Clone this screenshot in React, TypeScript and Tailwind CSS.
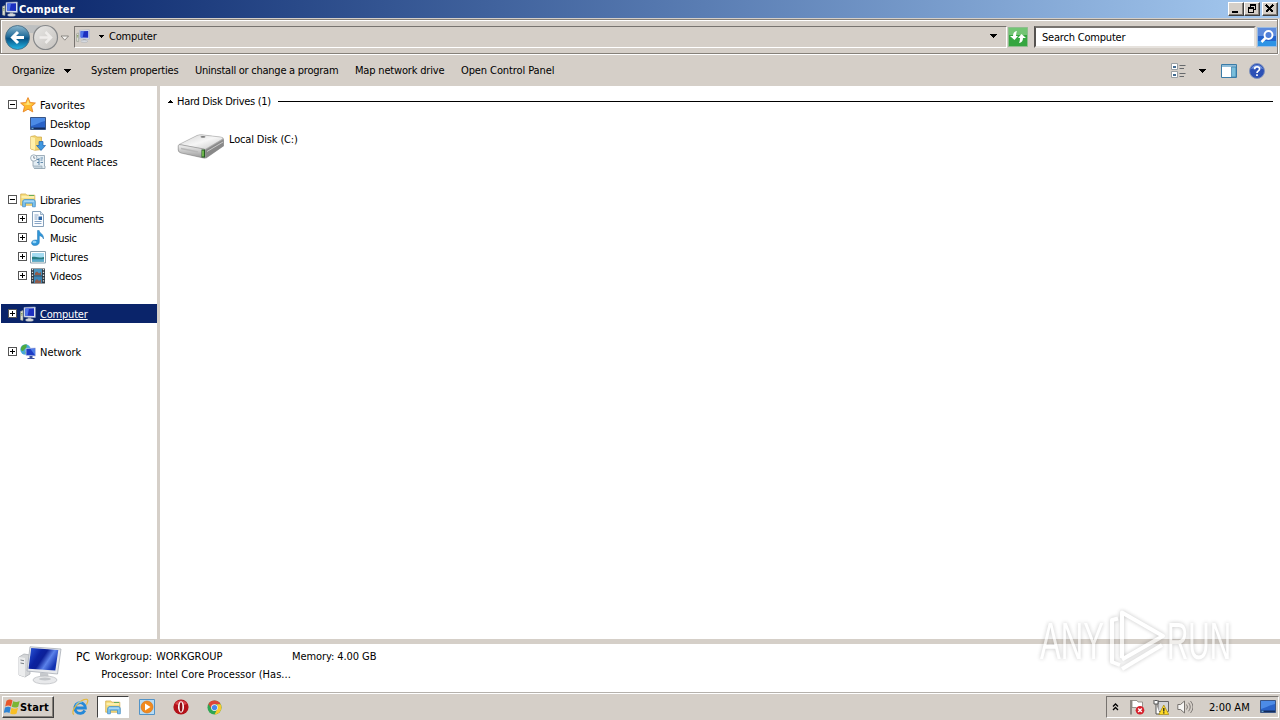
import type { ReactNode } from "react";
import clsx from "clsx";

type IconProps = { className?: string };

function PcIcon({ className = "h-4 w-4" }: IconProps) {
  return (
    <svg viewBox="0 0 16 16" className={className}>
      <path d="M0.5 5.5 3 4.5v10l-2.500-.5z" fill="#d9dcd0" stroke="#8f948c" strokeWidth=".6" />
      <path d="M1 7.500h1.500M1 9h1.500" stroke="#6c8a3e" strokeWidth=".8" />
      <path d="M4 1.500 15.300 1v10.500L4 11z" fill="#dfe6f5" stroke="#9aa6c4" strokeWidth=".6" />
      <path d="M5.200 2.600 14 2.200v7.900l-8.800-.3z" fill="#1c2fc0" />
      <path d="M5.200 2.600 9 2.400 7.500 9.900l-2.300-.1z" fill="#4f74ea" />
      <path d="M8 11.500h3l.4 1.800H7.600z" fill="#a9afb8" />
      <ellipse cx="9.500" cy="14" rx="4" ry="1.300" fill="#dcdfe4" stroke="#9ba1ab" strokeWidth=".5" />
    </svg>
  );
}

function BigPcIcon() {
  return (
    <svg viewBox="0 0 44 40" className="h-10 w-11">
      <defs>
        <linearGradient id="screen" x1="0" y1="0" x2="1" y2=".5">
          <stop offset="0" stopColor="#2c5ade" />
          <stop offset=".4" stopColor="#0b22a0" />
          <stop offset=".55" stopColor="#0c2098" />
          <stop offset=".75" stopColor="#5b82ea" />
          <stop offset="1" stopColor="#1231b0" />
        </linearGradient>
      </defs>
      <path d="M1 11 6 8l6 1v19l-5 3-6-2z" fill="#d4d6d8" stroke="#a7abb0" strokeWidth=".7" />
      <path d="M1 11 7 12v19l-6-2z" fill="#ecedee" />
      <path d="M2.500 14 6 14.700M2.500 17 6 17.700" stroke="#7b8087" />
      <path d="M12 .8 43 3l-3.500 25L9 25z" fill="#e7e9ec" stroke="#a8adb6" strokeWidth=".8" />
      <path d="M13.200 2 40.300 4l-3 20.500-26.800-1.800z" fill="url(#screen)" />
      <path d="M22 27h8l1 6h-9z" fill="#c6c9cd" />
      <ellipse cx="27" cy="34" rx="12" ry="4" fill="#e8e9eb" stroke="#b7babf" strokeWidth=".7" />
      <ellipse cx="27" cy="33" rx="6" ry="1.500" fill="#c3c6ca" />
    </svg>
  );
}

function StarIcon() {
  return (
    <svg viewBox="0 0 16 16" className="h-4 w-4">
      <path d="M8 .6 10.200 5.500l5.200.5-3.900 3.500 1.300 5.400L8 12.200l-4.800 2.700 1.300-5.400L.6 6l5.200-.5z" fill="#fdb92c" stroke="#e8862a" strokeWidth=".9" strokeLinejoin="round" />
      <path d="M8 2.500 9.400 6.500 13 7l-5 1-5-1 3.600-.5z" fill="#ffe57c" />
    </svg>
  );
}

function DesktopIcon({ className = "h-4 w-4" }: IconProps) {
  return (
    <svg viewBox="0 0 16 16" className={className}>
      <path d="M.5 1.500h15v12H.5z" fill="#2a63c8" stroke="#3a5585" />
      <path d="M1 2h14v3C10 6 6 9 1 10z" fill="#4c8be6" />
      <path d="M1 11.500h14v1.500H1z" fill="#142d5c" />
      <path d="M1.500 12.300h2" stroke="#7ec2f0" />
    </svg>
  );
}

function DownloadsIcon() {
  return (
    <svg viewBox="0 0 16 16" className="h-4 w-4">
      <path d="M.8 1.500 5 .7 7 2h4.500v12.500L5 15.300.8 14z" fill="#f2d675" stroke="#cfa53e" strokeWidth=".7" />
      <path d="M1 1.800 5 3v12L1 13.800z" fill="#fff0ab" />
      <path d="M9 6.500h4v4h2.500L11 15.500 6.500 10.500H9z" fill="#3f97e0" stroke="#1f62ae" strokeWidth=".7" />
    </svg>
  );
}

function RecentIcon() {
  return (
    <svg viewBox="0 0 16 16" className="h-4 w-4">
      <path d="M5 1.500h9.500V12H15v2.500H4.500L3 12V7z" fill="#e3edf4" stroke="#8a9dab" strokeWidth=".8" />
      <path d="M3 12h9v2.500H4" fill="#c5d3dd" stroke="#8a9dab" strokeWidth=".6" />
      <path d="M7 5.500h2M10.500 4h2.500M7 8.500h2M10.500 8.500h2.500M9 4v7M10.500 6h2" stroke="#557fa3" strokeWidth=".9" />
      <circle cx="3.800" cy="4" r="3.200" fill="#f6fafd" stroke="#8a9dab" strokeWidth=".8" />
      <path d="M3.800 2v2.200h1.500" fill="none" stroke="#567" strokeWidth=".7" />
    </svg>
  );
}

function LibraryIcon() {
  return (
    <svg viewBox="0 0 16 16" className="h-4 w-4">
      <path d="M.7 2h5L7 3.200h7.800v10H.7z" fill="#f7df80" stroke="#cda341" strokeWidth=".7" />
      <path d="M1.500 5h12.800" stroke="#fff6c6" strokeWidth="1.300" />
      <path d="M9 3.500h5" stroke="#67ad58" />
      <path d="M2.600 14.800V10c0-1.600.9-2.500 2.500-2.500H13c1.600 0 2.300.9 2.300 2.500v4.800h-2.800v-3.600H5.400v3.600z" fill="#7cc2ee" stroke="#3a86c4" strokeWidth=".7" />
      <path d="M4 9.200h10" stroke="#cdeafd" strokeWidth=".8" />
    </svg>
  );
}

function DocumentIcon() {
  return (
    <svg viewBox="0 0 16 16" className="h-4 w-4">
      <path d="M2.500.5h8l3 3v12h-11z" fill="#fbfdff" stroke="#7895b2" strokeWidth=".9" />
      <path d="M10.500.5v3h3" fill="#d5e3ef" stroke="#7895b2" strokeWidth=".7" />
      <path d="M4.500 4h4M4.500 6h3M4.500 8h3M4.500 10.500h7M4.500 12.500h7" stroke="#7a9bc0" strokeWidth=".9" />
      <path d="M8.500 5.500h3.500V9H8.500z" fill="#2b65a5" />
    </svg>
  );
}

function MusicIcon() {
  return (
    <svg viewBox="0 0 16 16" className="h-4 w-4">
      <path d="M7.500.5h1.700c.4 3 4.800 3.400 4.300 8.500-.6-2-2.200-3-4.200-3.200V12c0 2-1.700 3.500-4.300 3.500-2 0-3.500-1-3.500-2.600 0-2.300 3.300-3.500 6-2.600z" fill="#2f96d8" stroke="#2374b5" strokeWidth=".5" />
      <ellipse cx="4.500" cy="12" rx="2" ry="1.200" fill="#93d3f7" />
    </svg>
  );
}

function PictureIcon() {
  return (
    <svg viewBox="0 0 16 16" className="h-4 w-4">
      <path d="M.5 2.500h15v11.500H.5z" fill="#fff" stroke="#8aa0ad" />
      <path d="M2 4h12v8.500H2z" fill="#a5dcf2" />
      <path d="M2 8c3-1 5 1.500 12 0v4.500H2z" fill="#287e83" />
      <path d="M2 10.500c4-1 8 .5 12-.5v2.500H2z" fill="#58a9cc" />
    </svg>
  );
}

function VideoIcon() {
  return (
    <svg viewBox="0 0 16 16" className="h-4 w-4">
      <path d="M1 .5h14v15H1z" fill="#303a42" />
      <path d="M4 1h8v6.500H4z" fill="#4a94bf" />
      <path d="M4 8.300h8V15H4z" fill="#3b86b6" />
      <path d="M5 5 7 3.500l2 2L11 4v3H5zM5 13l2-2 2 2 2-1.500V15H5z" fill="#8f5b4c" />
      <path d="M2.500 1v14M13.500 1v14" stroke="#dfe6ea" strokeWidth="1.300" strokeDasharray="1.300 1.500" />
    </svg>
  );
}

function NetworkIcon() {
  return (
    <svg viewBox="0 0 16 16" className="h-4 w-4">
      <circle cx="5.500" cy="5.500" r="5.200" fill="#47a8d8" />
      <path d="M1 4C2 1 5 .2 7 .6 6 2 7.500 3 5.500 4.500S4 7 2.500 7 1 5 1 4zM5 8l3-1v3.500H6z" fill="#4fab3e" />
      <path d="M6 4.500 15.500 4v8L6 11.500z" fill="#1e3cc6" stroke="#c2cce8" strokeWidth=".8" />
      <path d="M10.500 5 15 4.700v6.500z" fill="#4d7de8" />
      <path d="M9.500 12h3v2h2v1h-7v-1h2z" fill="#394f9e" />
    </svg>
  );
}

function DriveIcon() {
  return (
    <svg viewBox="0 0 48 28" className="h-7 w-12">
      <defs>
        <linearGradient id="lid" x1="0" y1="0" x2="1" y2="1">
          <stop offset="0" stopColor="#d2d2d2" />
          <stop offset=".5" stopColor="#f6f6f6" />
          <stop offset="1" stopColor="#c3c3c3" />
        </linearGradient>
        <linearGradient id="front" x1="0" y1="0" x2="0" y2="1">
          <stop offset="0" stopColor="#f3f3f3" />
          <stop offset="1" stopColor="#989898" />
        </linearGradient>
      </defs>
      <path d="M1.500 13 20 3.500q2-1 5-.7l19 2.300q3 .5 3 3V14L29 26.500 3.500 20.500Q1 20 1 17z" fill="#a3a3a3" />
      <path d="M2 12.500 20 3.500q2-1 5-.7l19 2.300q3 .5 1.500 2L28 17.500z" fill="url(#lid)" stroke="#aaa" strokeWidth=".6" />
      <path d="M1.200 13.500Q1.500 12.300 4 12.800L27 17q1.500.5 1.500 2v6q0 1.500-2 1L4 21q-2.500-.6-2.800-3z" fill="url(#front)" stroke="#888" strokeWidth=".6" />
      <path d="M4 16.500 21 20" stroke="#b7b7b7" strokeWidth="1.300" />
      <path d="M28.500 18 46.500 7.500V14L29 26z" fill="#898989" />
      <path d="M30 19.500 46 10" stroke="#c8c8c8" />
      <path d="M24.500 17.500h3.500v8h-3.500z" fill="#245b22" />
      <path d="M26 18.500v6" stroke="#9cf067" strokeWidth="1.200" />
      <ellipse cx="26" cy="4.800" rx="2.500" ry=".9" fill="#777" />
    </svg>
  );
}

function WindowsFlag() {
  return (
    <svg viewBox="0 0 16 16" className="h-4 w-4 shrink-0">
      <path d="M2.500 1.800q3.500-2.300 6-.2L7 7.500Q4.500 5.800 1.200 7.400z" fill="#e8562a" />
      <path d="M9.200 2.200q3 1.700 6.500-.2L14.200 7.700q-3.200 1.700-6.500.1z" fill="#7ab636" />
      <path d="M1 8.500Q4.500 7 6.800 8.500L5.500 14Q3 12.300-.3 14z" fill="#2f84d4" />
      <path d="M7.500 8.800q3 1.700 6.500 0L12.600 14.400q-3.100 1.700-6.400 0z" fill="#f8bf26" />
    </svg>
  );
}

function IeIcon() {
  return (
    <svg viewBox="0 0 18 18" className="h-[18px] w-[18px]">
      <path d="M13.800 12.500A5.300 5.300 0 1 1 14.400 10H5" fill="none" stroke="#2488d8" strokeWidth="2.800" />
      <path d="M3 16.500C-1 15 6 4 13 1.600c5-1.500 4.300 2 2.500 5" fill="none" stroke="#e2b83d" strokeWidth="1.200" />
      <path d="M4.500 7Q7 3 11 4" fill="none" stroke="#8fd2fa" strokeWidth=".9" />
    </svg>
  );
}

function PlayerIcon() {
  return (
    <svg viewBox="0 0 16 16" className="h-4 w-4">
      <path d="M.5.5h15v15H.5z" fill="#b7dcf5" stroke="#5293c7" />
      <circle cx="8" cy="8" r="6" fill="#f18a1e" stroke="#d56f13" strokeWidth=".6" />
      <path d="M6 4.500 11.500 8 6 11.500z" fill="#fff" />
    </svg>
  );
}

function OperaIcon() {
  return (
    <svg viewBox="0 0 16 16" className="h-4 w-4">
      <circle cx="8" cy="8" r="7.600" fill="#b31119" />
      <path d="M2 5a7 7 0 0 1 12 0L8 7z" fill="#d8444a" />
      <ellipse cx="8" cy="8" rx="3" ry="5.800" fill="#fff" />
      <ellipse cx="8" cy="8" rx="1.400" ry="4.700" fill="#8e0d14" />
    </svg>
  );
}

function ChromeIcon() {
  return (
    <svg viewBox="0 0 16 16" className="h-[15px] w-[15px]">
      <circle cx="8" cy="8" r="7.500" fill="#2fa652" />
      <path d="M8 8 1.500 4.300A7.500 7.500 0 0 1 14.500 4.500H8z" fill="#dd4437" />
      <path d="M14.500 4.500A7.500 7.500 0 0 1 8 15.500L11 9.500V4.500z" fill="#fbc92d" />
      <path d="M1.500 4.300 5 9.500 8 4.500z" fill="#dd4437" />
      <circle cx="8" cy="8" r="3.600" fill="#f3f3f3" />
      <circle cx="8" cy="8" r="2.800" fill="#4686ee" />
    </svg>
  );
}

function NavButtons() {
  return (
    <svg viewBox="0 0 68 28" className="h-7 w-[68px]">
      <defs>
        <linearGradient id="back" x1="0" y1="0" x2="0" y2="1">
          <stop offset="0" stopColor="#8cb8cf" />
          <stop offset=".45" stopColor="#256f9c" />
          <stop offset=".55" stopColor="#075385" />
          <stop offset="1" stopColor="#25b9e8" />
        </linearGradient>
        <linearGradient id="fwd" x1="0" y1="0" x2="1" y2="1">
          <stop offset="0" stopColor="#e9e8e6" />
          <stop offset="1" stopColor="#c4c1bd" />
        </linearGradient>
      </defs>
      <path d="M5 4Q26 0 48 4v6H5z" fill="#b3b9bd" opacity=".7" />
      <circle cx="13.500" cy="14.500" r="12" fill="url(#back)" stroke="#466c83" strokeWidth=".9" />
      <path d="M14 9 8.500 14.500l5.500 5.500M9 14.500H20" fill="none" stroke="#fff" strokeWidth="3" />
      <circle cx="41.500" cy="14.500" r="12" fill="url(#fwd)" stroke="#858789" strokeWidth="1.200" />
      <path d="M41.500 9 47 14.500 41.500 20M46.500 14.500h-11" fill="none" stroke="#efedeb" strokeWidth="2.500" />
      <path d="M57 13h7.500l-3.700 4.200z" fill="#f4f2ef" stroke="#77736f" strokeWidth=".8" />
    </svg>
  );
}

function Arrow({ className }: IconProps) {
  return (
    <svg viewBox="0 0 7 4" className={clsx("shrink-0", className)} shapeRendering="crispEdges">
      <path d="M0 0h7L3.500 4z" fill="#000" />
    </svg>
  );
}

function Expander({ open }: { open?: boolean }) {
  return (
    <svg viewBox="0 0 9 9" className="h-[9px] w-[9px] shrink-0" shapeRendering="crispEdges">
      <path d="M.5.5h8v8h-8z" fill="#fff" stroke="#555" />
      <path d={open ? "M2 4.500h5" : "M2 4.500h5M4.500 2v5"} stroke="#000" />
    </svg>
  );
}

function WindowButton({ children }: { children: ReactNode }) {
  return (
    <div className="flex h-3.5 w-4 items-center justify-center border border-t-white border-r-[#404040] border-b-[#404040] border-l-white bg-[#d5cfc8] shadow-[inset_-1px_-1px_0_#858079]">
      <svg viewBox="0 0 12 12" className="h-3 w-3 shrink-0" fill="none" stroke="#000" shapeRendering="crispEdges">
        {children}
      </svg>
    </div>
  );
}

type TreeItem = {
  label: string;
  icon: ReactNode;
  child?: boolean;
  open?: boolean;
  leaf?: boolean;
  selected?: boolean;
  tracking?: string;
};

const groups: TreeItem[][] = [
  [
    { label: "Favorites", icon: <StarIcon />, open: true, tracking: "tracking-[0.05px]" },
    { label: "Desktop", icon: <DesktopIcon />, child: true, leaf: true, tracking: "tracking-[-0.1px]" },
    { label: "Downloads", icon: <DownloadsIcon />, child: true, leaf: true, tracking: "tracking-[-0.2px]" },
    { label: "Recent Places", icon: <RecentIcon />, child: true, leaf: true, tracking: "tracking-[-0.1px]" },
  ],
  [
    { label: "Libraries", icon: <LibraryIcon />, open: true, tracking: "tracking-[-0.25px]" },
    { label: "Documents", icon: <DocumentIcon />, child: true, tracking: "tracking-[-0.3px]" },
    { label: "Music", icon: <MusicIcon />, child: true, tracking: "tracking-[-0.3px]" },
    { label: "Pictures", icon: <PictureIcon />, child: true, tracking: "tracking-[-0.1px]" },
    { label: "Videos", icon: <VideoIcon />, child: true, tracking: "tracking-[-0.2px]" },
  ],
  [{ label: "Computer", icon: <PcIcon />, selected: true, tracking: "tracking-[-0.2px]" }],
  [{ label: "Network", icon: <NetworkIcon /> }],
];

function TreeRow({ item }: { item: TreeItem }) {
  return (
    <div
      className={clsx(
        "ml-px flex h-[19px] items-center",
        item.child ? "pl-[17px]" : "pl-[7px]",
        item.selected && "bg-[#0a246a] text-white underline",
      )}
    >
      <div className="w-3">{!item.leaf && <Expander open={item.open} />}</div>
      <div className="w-5">{item.icon}</div>
      <span className={clsx("pt-0.5", item.tracking)}>{item.label}</span>
    </div>
  );
}

function TitleBar() {
  return (
    <header className="flex h-[18px] shrink-0 items-center bg-linear-to-r from-[#0a246a] to-[#a6caf0] px-0.5">
      <PcIcon />
      <h1 className="ml-px flex-1 pt-px text-[11px] font-bold tracking-[0.1px] text-white">Computer</h1>
      <WindowButton>
        <path d="M2 9h6" strokeWidth="2" />
      </WindowButton>
      <WindowButton>
        <path d="M4 2h6M4.500 2v2M9.500 2v5M8 6.500h2M2 5h6M2.500 5v5M7.500 5v5M2 9.500h6M4 1.500h6M2 4.500h6" />
      </WindowButton>
      <div className="ml-0.5">
        <WindowButton>
          <path d="m2 2 7 7m0-7-7 7" strokeWidth="1.700" />
        </WindowButton>
      </div>
    </header>
  );
}

function AddressBar() {
  return (
    <div className="mr-0.5 flex h-[35px] shrink-0 items-center border border-[#858079] shadow-[inset_1px_1px_0_#fff,0_1px_0_#fff,1px_0_0_#fff]">
      <div className="ml-[3px]">
        <NavButtons />
      </div>
      <div className="ml-0.5 flex h-[22px] w-[933px] items-center border border-t-[#77736f] border-r-white border-b-white border-l-[#77736f] pb-px">
        <PcIcon className="ml-px h-3.5 w-3.5" />
        <Arrow className="ml-[9px] h-[3px] w-[5px]" />
        <span className="ml-[5px] flex-1 tracking-[-0.2px]">Computer</span>
        <Arrow className="mr-[9px] h-1 w-[7px]" />
      </div>
      <svg viewBox="0 0 20 20" className="ml-px h-5 w-5">
        <path d="M.5.5h19v19H.5z" fill="#35a640" stroke="#8fbd8f" />
        <path d="M1 1h18v7H1z" fill="#73c574" />
        <path d="M9 4Q5 4.500 5 9H2l4.500 4L10 9H8q0-3 1-5zM11 16q4-.5 4-5h3l-4.500-4L10 11h2q0 3-1 5z" fill="#fff" />
      </svg>
      <div className="ml-1.5 flex h-[22px] w-[222px] items-center border-2 border-t-[#77736f] border-r-[#e6e2dd] border-b-[#e6e2dd] border-l-[#55524f] bg-white pt-px pl-1.5">
        <span className="tracking-[-0.2px]">Search Computer</span>
      </div>
      <svg viewBox="0 0 20 20" className="ml-px h-5 w-5">
        <path d="M.5.5h19v19H.5z" fill="#2363cc" stroke="#9bbce2" />
        <path d="M1 1h18v8H1z" fill="#5d8bdc" />
        <path d="M1 14h18v5H1z" fill="#2d93e5" />
        <circle cx="11.500" cy="8" r="4" fill="#4f7fd9" stroke="#fff" strokeWidth="1.900" />
        <path d="M8.500 11 4.500 15" stroke="#fff" strokeWidth="2.500" />
      </svg>
    </div>
  );
}

function CommandBar() {
  return (
    <nav className="mt-px flex h-[31px] shrink-0 items-center pl-3">
      <span className="w-[52px] tracking-[-0.2px]">Organize</span>
      <Arrow className="mr-5 h-1 w-[7px]" />
      <span className="w-[104px] tracking-[-0.18px]">System properties</span>
      <span className="w-40 tracking-[-0.25px]">Uninstall or change a program</span>
      <span className="w-[106px] tracking-[-0.18px]">Map network drive</span>
      <span className="flex-1 tracking-[-0.1px]">Open Control Panel</span>
      <svg viewBox="0 0 16 16" className="h-4 w-4">
        <path d="M1.500.500h6v6h-6zM1.500 8.500h6v6h-6z" fill="#fff" stroke="#9ba1a5" />
        <path d="M3 4h3M3 12h3" stroke="#416b91" strokeWidth="2" />
        <path d="M9.500 2.500h6M9.500 5.500h4.500M9.500 10.500h6M9.500 13.500h4.500" stroke="#66696c" />
      </svg>
      <Arrow className="ml-[13px] h-1 w-[7px]" />
      <svg viewBox="0 0 16 14" className="ml-[15px] h-3.5 w-4">
        <path d="M.5.500h15v13H.5z" fill="#fff" stroke="#397ba7" />
        <path d="M1 1h14v2H1z" fill="#8fbdd9" />
        <path d="M10.500 3h4.500v10h-4.500z" fill="#79bedb" stroke="#397ba7" strokeWidth=".7" />
      </svg>
      <svg viewBox="0 0 16 16" className="mr-[15px] ml-3 h-4 w-4">
        <circle cx="8" cy="8" r="7.500" fill="#2c50b5" stroke="#8093bd" />
        <path d="M2 6a6.500 6.500 0 0 1 12 0q-6-2-12 0z" fill="#6f91dd" />
        <path d="M5.600 6.200C5.600 3 10.600 3 10.600 6 10.600 8 8 7.800 8 10M8 11.300v1.800" fill="none" stroke="#fff" strokeWidth="1.700" />
      </svg>
    </nav>
  );
}

function DetailsPane() {
  return (
    <section className="flex h-12 shrink-0 bg-white pl-[18px]">
      <div className="pt-0.5">
        <BigPcIcon />
      </div>
      <div className="ml-3.5 flex pt-1 leading-[18px]">
        <span className="w-5 text-[12px]">PC</span>
        <div className="w-[60px] pr-1 whitespace-nowrap">
          <p className="flex justify-end">Workgroup:</p>
          <p className="flex justify-end">Processor:</p>
        </div>
        <div className="w-[136px] whitespace-nowrap">
          <p>WORKGROUP</p>
          <p className="tracking-[0.04px]">Intel Core Processor (Has...</p>
        </div>
        <p className="tracking-[-0.08px]">Memory: 4.00 GB</p>
      </div>
    </section>
  );
}

function Tray() {
  return (
    <div className="flex h-[22px] w-[173px] items-center border border-t-[#77736f] border-r-white border-b-white border-l-[#77736f]">
      <svg viewBox="0 0 7 8" className="ml-[5px] h-2 w-[7px]" fill="none" stroke="#000" strokeWidth="1.300">
        <path d="M1 3.500 3.500 1 6 3.500M1 7l2.500-2.500L6 7" />
      </svg>
      <svg viewBox="0 0 16 16" className="ml-2.5 h-4 w-4">
        <path d="M2 1v14.500" stroke="#77736f" strokeWidth="1.500" />
        <path d="M3 1.500h5l1 1.500h4.500v7H8L7 8.500H3z" fill="#fff" stroke="#858079" strokeWidth=".8" />
        <circle cx="11" cy="11.300" r="4.300" fill="#d6212c" />
        <path d="m9.200 9.500 3.600 3.600m0-3.600-3.600 3.600" stroke="#fff" strokeWidth="1.400" />
      </svg>
      <svg viewBox="0 0 16 16" className="ml-2 h-4 w-4">
        <path d="M5 2.500h10.500v10H5z" fill="#d4d5d6" stroke="#666" />
        <path d="M1 1v4h4V1M3 5v10h4M1.500 1.500h3" fill="#fff" stroke="#555" />
        <path d="M10.800 6 15.800 15.500H5.800z" fill="#ffda25" stroke="#a28614" strokeWidth=".7" />
        <path d="M10.800 9v3.500M10.800 13.200v1.200" stroke="#222" strokeWidth="1.300" />
      </svg>
      <svg viewBox="0 0 16 16" className="ml-2 h-4 w-4" fill="none" stroke="#77736f">
        <path d="M.8 5.500h2.700L7.500 2v12l-4-3.500H.8z" fill="#f7f6f4" />
        <path d="M9.500 5.500q2 2.500 0 5M11.500 3.700q3.500 4.300 0 8.600M13.500 2q5 6 0 12" strokeWidth=".9" />
      </svg>
      <span className="ml-4 w-[51px] whitespace-nowrap">2:00 AM</span>
      <DesktopIcon className="h-4 w-4 shrink-0" />
    </div>
  );
}

function Taskbar() {
  return (
    <footer className="flex h-[27px] shrink-0 items-center border-t border-t-white bg-[#d5cfc8] pr-px pl-0.5">
      <button className="flex h-[22px] w-[52px] items-center border border-t-white border-r-[#404040] border-b-[#404040] border-l-white pl-px shadow-[inset_-1px_-1px_0_#858079]">
        <WindowsFlag />
        <span className="text-[11px] font-bold tracking-[0.15px]">Start</span>
      </button>
      <div className="ml-[17px]">
        <IeIcon />
      </div>
      <div className="ml-2 flex h-[22px] w-8 items-center justify-center border border-t-[#404040] border-r-white border-b-white border-l-[#404040] bg-white">
        <LibraryIcon />
      </div>
      <div className="ml-2.5">
        <PlayerIcon />
      </div>
      <div className="ml-[18px]">
        <OperaIcon />
      </div>
      <div className="ml-[18px] flex-1">
        <ChromeIcon />
      </div>
      <Tray />
    </footer>
  );
}

function Watermark() {
  return (
    <svg viewBox="0 0 210 76" className="pointer-events-none absolute top-[604px] left-[1034px] h-[76px] w-[210px] opacity-65 drop-shadow-[0_0_2px_rgba(0,0,0,0.35)]">
      <g fill="#fff" fontFamily="Liberation Sans, sans-serif" fontSize="51">
        <text transform="translate(6 55) scale(.61 1)">ANY</text>
        <text transform="translate(133 55) scale(.58 1)">RUN</text>
      </g>
      <g fill="none" stroke="#fff" strokeWidth="4" strokeLinejoin="round">
        <path d="M84 14.500 78 16v42l8 3" />
        <path d="M88 54V8.500L129 32 88 55.500" />
        <path d="m88 65 40-24" />
      </g>
    </svg>
  );
}

export default function App() {
  return (
    <div className="relative flex h-[720px] w-[1280px] flex-col overflow-hidden bg-[#d5cfc8] font-['DejaVu_Sans_Condensed','DejaVu_Sans',sans-serif] text-[11px] leading-none text-black">
      <TitleBar />
      <div className="h-px shrink-0 bg-[#d5cfc8]" />
      <AddressBar />
      <CommandBar />
      <main className="flex h-[553px] shrink-0">
        <aside className="flex w-[157px] flex-col gap-[19px] bg-white pt-[9px]">
          {groups.map((group) => (
            <div key={group[0].label}>
              {group.map((item) => (
                <TreeRow key={item.label} item={item} />
              ))}
            </div>
          ))}
        </aside>
        <section className="ml-[3px] flex-1 bg-white pt-2.5 pr-[7px] pl-2">
          <div className="flex h-[11px] items-center">
            <Arrow className="h-[3px] w-[5px] rotate-180" />
            <h2 className="ml-1 w-[101px] tracking-[-0.3px]">Hard Disk Drives (1)</h2>
            <div className="h-px flex-1 bg-black" />
          </div>
          <div className="mt-[25px] ml-[9px] flex">
            <DriveIcon />
            <span className="ml-[4px] pt-0.5 tracking-[-0.16px]">Local Disk (C:)</span>
          </div>
        </section>
      </main>
      <div className="h-[5px] shrink-0" />
      <DetailsPane />
      <div className="h-px shrink-0 bg-[#b5b1ac]" />
      <Taskbar />
      <Watermark />
    </div>
  );
}
